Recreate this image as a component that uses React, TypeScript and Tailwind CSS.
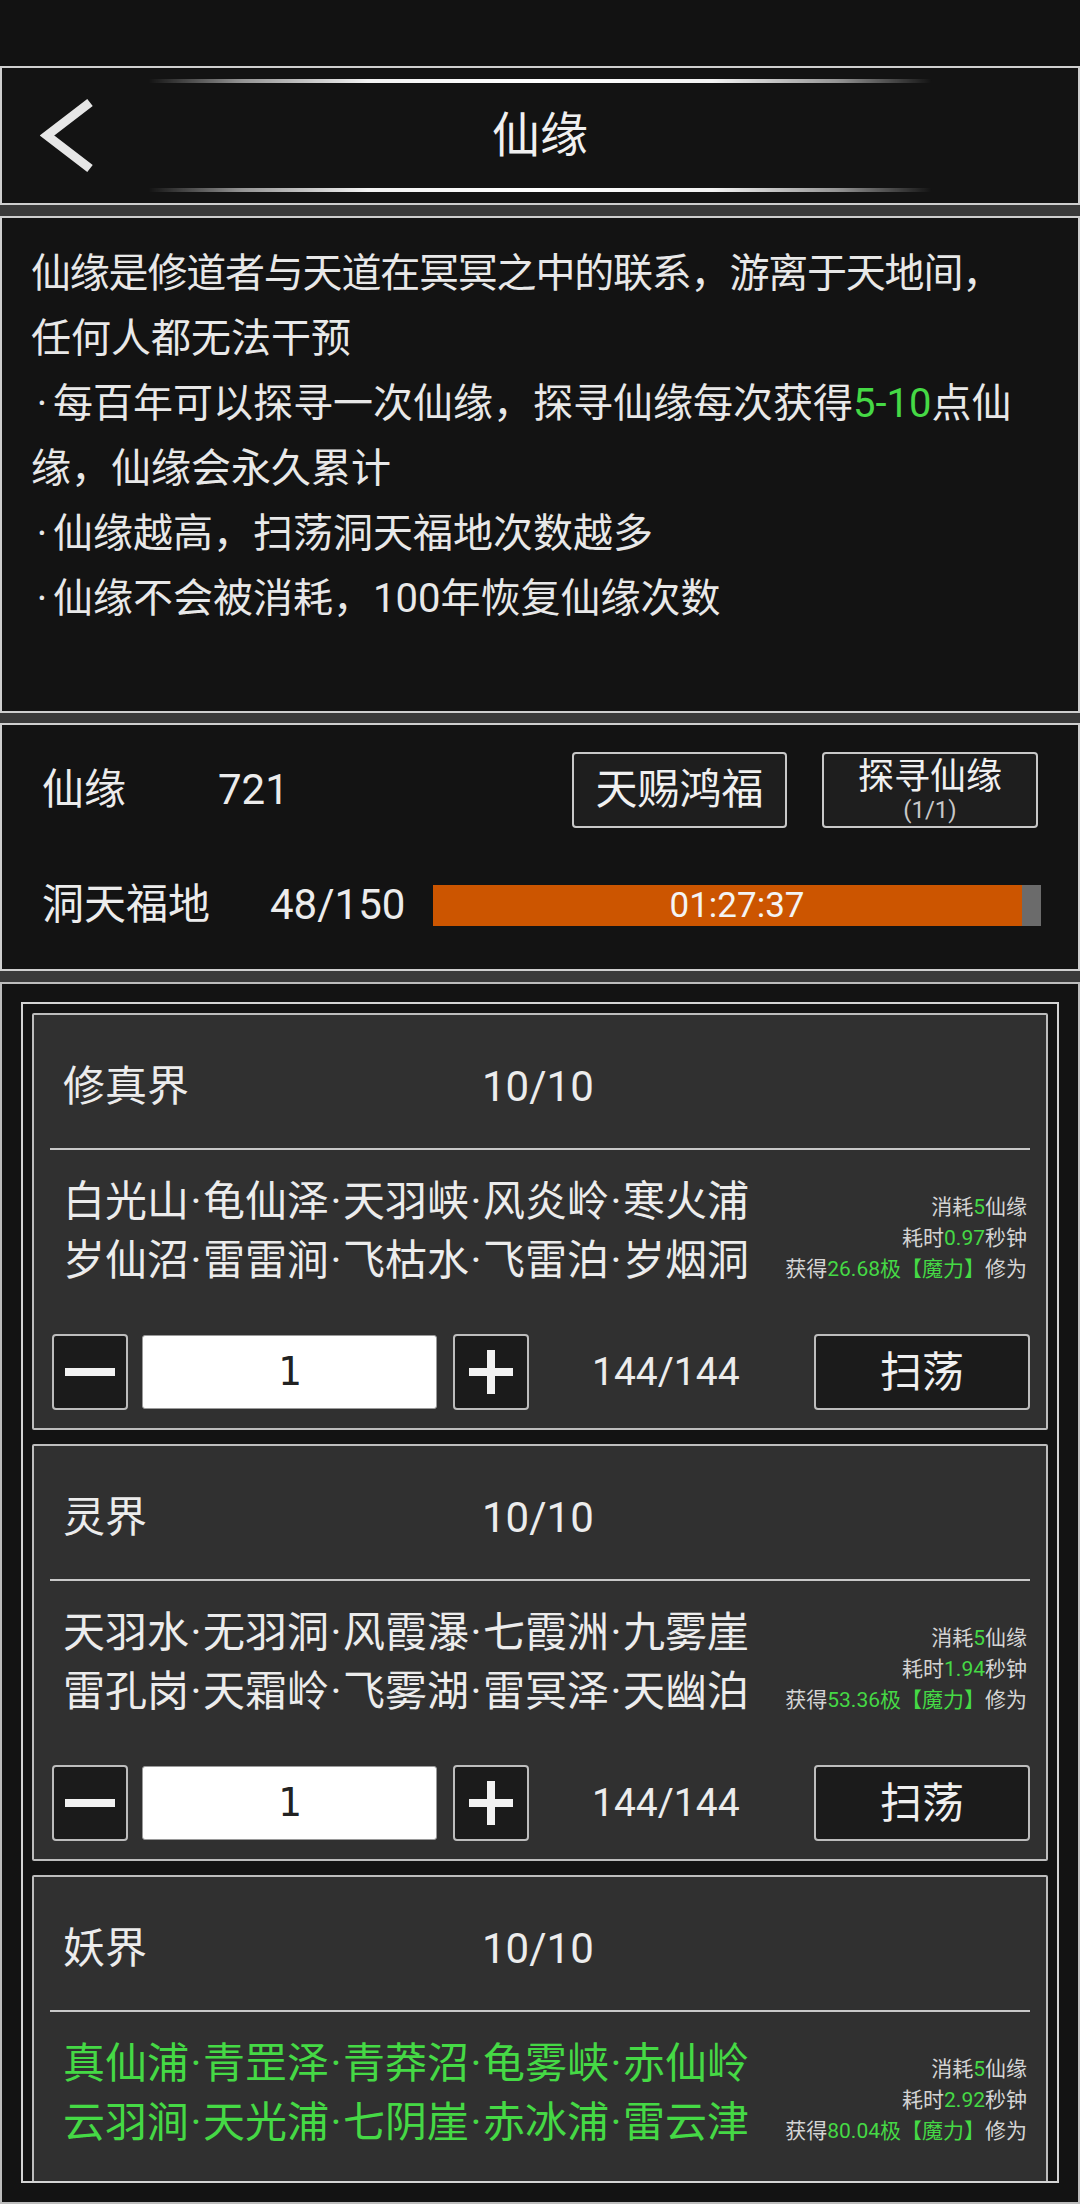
import React from 'react';

interface Realm {
  name: string;
  lines: string[];
  greenNames?: boolean;
  time: string;
  gain: string;
  clipped?: boolean;
}

const realms: Realm[] = [
  {
    name: '修真界',
    lines: ['白光山·龟仙泽·天羽峡·风炎岭·寒火浦', '岁仙沼·雷雷涧·飞枯水·飞雷泊·岁烟洞'],
    time: '0.97',
    gain: '26.68',
  },
  {
    name: '灵界',
    lines: ['天羽水·无羽洞·风霞瀑·七霞洲·九雾崖', '雷孔岗·天霜岭·飞雾湖·雷冥泽·天幽泊'],
    time: '1.94',
    gain: '53.36',
  },
  {
    name: '妖界',
    lines: ['真仙浦·青罡泽·青莽沼·龟雾峡·赤仙岭', '云羽涧·天光浦·七阴崖·赤冰浦·雷云津'],
    greenNames: true,
    time: '2.92',
    gain: '80.04',
    clipped: true,
  },
];

const GlowLine = ({ className }: { className: string }) => (
  <div
    className={`absolute left-[146px] w-[784px] h-[4px] rounded-full blur-[0.6px] bg-[linear-gradient(90deg,rgba(255,255,255,0)_0%,rgba(255,255,255,0.55)_12%,rgba(255,255,255,0.95)_28%,#ffffff_50%,rgba(255,255,255,0.95)_72%,rgba(255,255,255,0.55)_88%,rgba(255,255,255,0)_100%)] ${className}`}
  />
);

// place names joined by a slightly padded middle dot
const PlaceLine = ({ text }: { text: string }) => {
  const parts = text.split('·');
  return (
    <div>
      {parts.map((p, i) => (
        <React.Fragment key={p}>
          {i > 0 && <span className="mx-[1.5px]">·</span>}
          {p}
        </React.Fragment>
      ))}
    </div>
  );
};

const Dot = () => <span className="inline-block w-[22px] text-center">·</span>;

const RealmCard = ({ realm }: { realm: Realm }) => (
  <div className="h-[417px] shrink-0 border-2 border-[#bdbdbd] bg-[#303030] rounded-[2px]">
    {/* Title */}
    <div className="h-[133px] pt-[10px] pl-[29px] flex items-center text-[42px] leading-none text-[#ececec]">
      <span className="w-[419px]">{realm.name}</span>
      <span>10/10</span>
    </div>
    <div className="mx-[16px] h-[2px] bg-[#c8c8c8]" />

    {/* Places + info */}
    <div className="mt-[22px] pl-[29px] pr-[19px] flex items-start justify-between">
      <div
        className={`text-[42px] leading-[59px] whitespace-nowrap ${
          realm.greenNames ? 'text-[#45d945]' : 'text-[#ececec]'
        }`}
      >
        {realm.lines.map((l) => (
          <PlaceLine key={l} text={l} />
        ))}
      </div>
      <div className="mt-[20px] text-[21px] leading-[31px] text-right text-[#d4d4d4] whitespace-nowrap">
        <div>
          消耗<span className="text-[#45d945]">5</span>仙缘
        </div>
        <div>
          耗时<span className="text-[#45d945]">{realm.time}</span>秒钟
        </div>
        <div>
          获得<span className="text-[#45d945]">{realm.gain}极【魔力】</span>修为
        </div>
      </div>
    </div>

    {/* Controls (third card is scrolled out of view) */}
    {!realm.clipped && (
      <div className="mt-[44px] pl-[18px] pr-[16px] flex items-center">
        <button className="w-[76px] h-[76px] flex items-center justify-center border-2 border-[#bdbdbd] bg-[#1b1b1b] rounded-[4px]">
          <svg width="50" height="10" viewBox="0 0 50 10">
            <rect x="0" y="1" width="50" height="8" fill="#f2f2f2" />
          </svg>
        </button>
        <div className="ml-[14px] w-[295px] h-[74px] flex items-center justify-center bg-white rounded-[3px] border border-[#9a9a9a] text-[39px] text-[#222] font-[family-name:'DejaVu_Sans_Mono',monospace]">
          1
        </div>
        <button className="ml-[16px] w-[76px] h-[76px] flex items-center justify-center border-2 border-[#bdbdbd] bg-[#1b1b1b] rounded-[4px]">
          <svg width="44" height="44" viewBox="0 0 44 44">
            <rect x="0" y="18" width="44" height="8" fill="#f2f2f2" />
            <rect x="18" y="0" width="8" height="44" fill="#f2f2f2" />
          </svg>
        </button>
        <span className="ml-[63px] text-[39px] text-[#ececec]">144/144</span>
        <button className="ml-auto w-[216px] h-[76px] flex items-center justify-center border-2 border-[#bdbdbd] bg-[#1b1b1b] rounded-[4px] text-[42px] text-[#f0f0f0]">
          扫荡
        </button>
      </div>
    )}
  </div>
);

export default function App() {
  return (
    <div className="w-[1080px] h-[2204px] overflow-hidden bg-[#3a3a3a] text-[#ececec] font-[family-name:Roboto,'Noto_Sans_CJK_SC',sans-serif]">
      {/* Status bar */}
      <div className="h-[66px] bg-[#121212]" />

      {/* Header */}
      <div className="relative h-[139px] border-2 border-[#cfcfcf] bg-[#131313] grid grid-cols-[140px_1fr_140px] items-center">
        <GlowLine className="top-[11px]" />
        <GlowLine className="bottom-[11px]" />
        <div className="pl-[38px] flex items-center">
          <svg width="60" height="80" viewBox="0 0 60 80">
            <polyline
              points="50,6.5 7,39.5 50,72.5"
              fill="none"
              stroke="#e6e6e6"
              strokeWidth="9"
              strokeLinejoin="miter"
            />
          </svg>
        </div>
        <div className="text-center text-[48px] leading-none text-[#f0f0f0]">仙缘</div>
        <div />
      </div>

      {/* Description */}
      <div className="mt-[11px] h-[497px] border-2 border-[#cfcfcf] bg-[#131313] pl-[29px] pt-[23px] text-[40px] leading-[65px] text-[#e8e8e8] whitespace-nowrap">
        <div className="tracking-[-1.2px]">仙缘是修道者与天道在冥冥之中的联系，游离于天地间，</div>
        <div>任何人都无法干预</div>
        <div>
          <Dot />每百年可以探寻一次仙缘，探寻仙缘每次获得<span className="text-[#45d945]">5-10</span>点仙
        </div>
        <div>缘，仙缘会永久累计</div>
        <div>
          <Dot />仙缘越高，扫荡洞天福地次数越多
        </div>
        <div>
          <Dot />仙缘不会被消耗，100年恢复仙缘次数
        </div>
      </div>

      {/* Stats */}
      <div className="mt-[10px] h-[248px] border-2 border-[#cfcfcf] bg-[#131313] pl-[40px] pr-[37px] text-[42px] leading-none">
        <div className="pt-[27px] h-[103px] flex items-end">
          <div className="h-[76px] w-full flex items-center">
            <span className="w-[176px]">仙缘</span>
            <span>721</span>
            <div className="ml-auto mr-[3px] flex gap-[35px]">
              <button className="w-[215px] h-[76px] flex items-center justify-center border-2 border-[#c8c8c8] bg-[#1e1e1e] rounded-[4px] text-[42px] text-[#f0f0f0]">
                天赐鸿福
              </button>
              <button className="w-[216px] h-[76px] flex flex-col items-center justify-center border-2 border-[#c8c8c8] bg-[#1e1e1e] rounded-[4px] text-[#f0f0f0]">
                <span className="text-[36px] leading-[40px]">探寻仙缘</span>
                <span className="text-[24px] leading-[26px] text-[#c8c8c8]">(1/1)</span>
              </button>
            </div>
          </div>
        </div>
        <div className="mt-[47px] h-[60px] flex items-center">
          <span className="w-[228px]">洞天福地</span>
          <span className="w-[163px]">48/150</span>
          <div className="relative w-[608px] h-[41px] bg-[#6b6b6b]">
            <div className="absolute left-0 top-0 h-full w-[589px] bg-[#cc5500]" />
            <div className="absolute inset-0 flex items-center justify-center text-[35px] text-[#f4f4f4]">
              01:27:37
            </div>
          </div>
        </div>
      </div>

      {/* Realm list */}
      <div className="mt-[11px] h-[1222px] border-2 border-[#bdbdbd] bg-[#131313] pt-[18px] px-[19px]">
        <div className="h-[1181px] overflow-hidden border-2 border-[#d4d4d4] p-[9px] flex flex-col gap-[14px]">
          {realms.map((r) => (
            <RealmCard key={r.name} realm={r} />
          ))}
        </div>
      </div>
    </div>
  );
}
